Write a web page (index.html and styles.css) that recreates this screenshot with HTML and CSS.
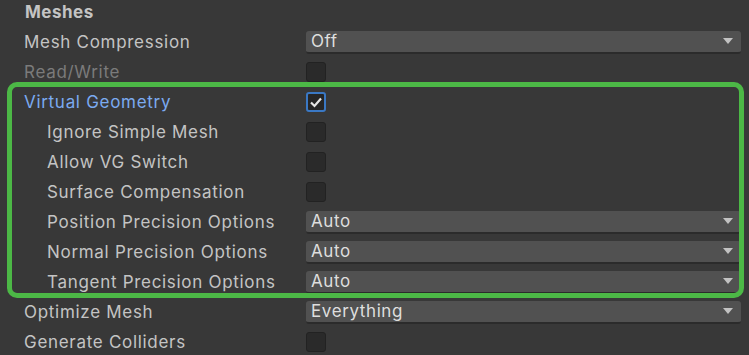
FILE: index.html
```html
<!DOCTYPE html>
<html lang="en">
<head>
    <meta charset="UTF-8">
    <title>Meshes</title>
    <link rel="stylesheet" href="styles.css">
</head>
<body>
    <div class="inspector">
        <div class="section-title">Meshes</div>

        <div class="row">
            <div class="label">Mesh Compression</div>
            <div class="value"><div class="dropdown">Off</div></div>
        </div>
        <div class="row">
            <div class="label disabled">Read/Write</div>
            <div class="value"><div class="checkbox"></div></div>
        </div>
        <div class="row">
            <div class="label active">Virtual Geometry</div>
            <div class="value">
                <div class="checkbox checked">
                    <svg width="14" height="12" viewBox="0 0 14 12"><path d="M2 6.5 L5.5 10 L12 2.5" fill="none" stroke="#e6e6e6" stroke-width="2.2"/></svg>
                </div>
            </div>
        </div>
        <div class="row">
            <div class="label nested">Ignore Simple Mesh</div>
            <div class="value"><div class="checkbox"></div></div>
        </div>
        <div class="row">
            <div class="label nested">Allow VG Switch</div>
            <div class="value"><div class="checkbox"></div></div>
        </div>
        <div class="row">
            <div class="label nested">Surface Compensation</div>
            <div class="value"><div class="checkbox"></div></div>
        </div>
        <div class="row">
            <div class="label nested">Position Precision Options</div>
            <div class="value"><div class="dropdown">Auto</div></div>
        </div>
        <div class="row">
            <div class="label nested">Normal Precision Options</div>
            <div class="value"><div class="dropdown">Auto</div></div>
        </div>
        <div class="row">
            <div class="label nested">Tangent Precision Options</div>
            <div class="value"><div class="dropdown">Auto</div></div>
        </div>
        <div class="row">
            <div class="label">Optimize Mesh</div>
            <div class="value"><div class="dropdown">Everything</div></div>
        </div>
        <div class="row">
            <div class="label">Generate Colliders</div>
            <div class="value"><div class="checkbox"></div></div>
        </div>

        <div class="highlight"></div>
    </div>
</body>
</html>
```

FILE: styles.css
```css
* { box-sizing: border-box; }
body { margin: 0; background: #383838; font-family: Inter, "Noto Sans", sans-serif; font-size: 17px; color: #c4c4c4; }
.inspector { position: relative; padding-left: 24px; padding-right: 8px; }
.section-title { height: 27px; line-height: 24px; font-weight: bold; color: #c4c4c4; padding-left: 1px; letter-spacing: 0.5px; }
.row { display: flex; align-items: center; height: 30px; }
.label { width: 282px; white-space: nowrap; letter-spacing: 0.7px; }
.label.nested { padding-left: 23px; }
.label.disabled { color: #7b7b7b; }
.label.active { color: #7baaf0; }
.value { flex: 1; display: flex; align-items: center; }
.dropdown { position: relative; flex: 1; height: 23px; line-height: 21px; margin-top: 1px; padding-left: 5px; background: #515151; border-bottom: 2px solid #2b2b2b; border-radius: 3px; color: #dedede; letter-spacing: 0.6px; }
.dropdown::after { content: ""; position: absolute; right: 8px; top: 7px; border-left: 5px solid transparent; border-right: 5px solid transparent; border-top: 6px solid #c2c2c2; }
.checkbox { width: 20px; height: 20px; background: #2a2a2a; border: 1px solid #222; border-radius: 3px; display: flex; align-items: center; justify-content: center; margin-top: -1px; }
.checkbox.checked { border: 2px solid #3a78c4; background: #262626; }
.highlight { position: absolute; left: 7px; top: 82px; width: 737px; height: 216px; border: 5px solid #4cb846; border-radius: 10px; pointer-events: none; }
```
